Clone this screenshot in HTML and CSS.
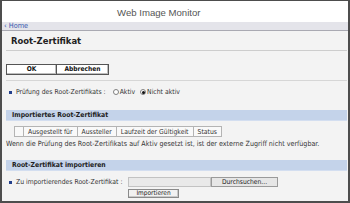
FILE: index.html
```html
<!DOCTYPE html>
<html lang="de">
<head>
<meta charset="utf-8">
<title>Root-Zertifikat</title>
<link rel="stylesheet" href="styles.css">
</head>
<body>
<div class="frame">
  <header class="top">Web Image Monitor</header>
  <nav class="crumb"><span class="crumb-link">‹ Home</span></nav>
  <main class="main">
    <h1 class="title">Root-Zertifikat</h1>
    <div class="btn-group">
      <button class="btn3d">OK</button><button class="btn3d">Abbrechen</button>
    </div>
    <div class="rule"></div>
    <div class="field-row">
      <span class="bullet"></span>
      <span class="label">Prüfung des Root-Zertifikats :</span>
      <span class="radio"></span><span class="radio-label">Aktiv</span>
      <span class="radio checked"></span><span class="radio-label">Nicht aktiv</span>
    </div>
    <h2 class="section">Importiertes Root-Zertifikat</h2>
    <div class="cert-table">
      <span class="cell cell-empty"></span>
      <span class="cell">Ausgestellt für</span>
      <span class="cell">Aussteller</span>
      <span class="cell">Laufzeit der Gültigkeit</span>
      <span class="cell">Status</span>
    </div>
    <p class="note">Wenn die Prüfung des Root-Zertifikats auf Aktiv gesetzt ist, ist der externe Zugriff nicht verfügbar.</p>
    <h2 class="section section-2">Root-Zertifikat importieren</h2>
    <div class="field-row import-row">
      <span class="bullet"></span>
      <span class="label import-label">Zu importierendes Root-Zertifikat :</span>
      <span class="file-input"></span><button class="browse">Durchsuchen...</button>
    </div>
    <div class="submit-row">
      <button class="submit">Importieren</button>
    </div>
  </main>
</div>
</body>
</html>
```
FILE: styles.css
```css
* { box-sizing: border-box; }
html, body { margin: 0; padding: 0; }
body {
  width: 350px;
  height: 203px;
  overflow: hidden;
  font-family: "DejaVu Sans Condensed", "DejaVu Sans", sans-serif;
  color: #333;
}
.frame {
  height: 203px;
  border-top: 1px solid #4d4d4d;
  border-left: 2px solid #4d4d4d;
  border-right: 2px solid #4d4d4d;
  border-bottom: 2px solid #4d4d4d;
  display: flex;
  flex-direction: column;
  background: #f3f3f3;
}
.top {
  height: 21px;
  background: #fff;
  font-family: "Liberation Sans", Arial, sans-serif;
  font-size: 9.6px;
  line-height: 23px;
  color: #555;
  padding-left: 115px;
}
.crumb {
  height: 9px;
  background: #e4e4ea;
  border-bottom: 1px solid #a9a9b2;
  padding-left: 2px;
  font-size: 7.3px;
  line-height: 8px;
}
.crumb-link { color: #3a5ab0; }
.main {
  flex: 1;
  padding: 0 1px 0 4px;
  display: flex;
  flex-direction: column;
}
.title {
  margin: 0;
  height: 20px;
  line-height: 19px;
  padding-left: 5px;
  font-size: 9.4px;
  font-weight: bold;
  color: #222;
  border-bottom: 1px solid #cdcdcd;
}
.btn-group {
  margin-top: 13px;
  display: flex;
  height: 11px;
}
.btn3d {
  height: 11px;
  width: 51px;
  padding: 0;
  margin: 0;
  background: #fff;
  border: 1px solid #555;
  box-shadow: inset -1px -1px 0 #bdbdbd;
  font-family: inherit;
  font-size: 6.6px;
  font-weight: bold;
  color: #111;
  line-height: 9px;
}
.btn3d + .btn3d { width: 52px; border-left: none; }
.rule {
  margin-top: 5px;
  border-top: 1px solid #d6d6d6;
}
.field-row {
  display: flex;
  align-items: center;
  height: 22px;
  font-size: 6.8px;
  color: #333;
}
.bullet {
  width: 3px;
  height: 3px;
  background: #233f8c;
  margin-left: 3px;
  margin-right: 4px;
  flex: none;
}
.radio {
  width: 6px;
  height: 6px;
  border-radius: 50%;
  border: 1px solid #808080;
  background: #fff;
  margin-left: 7px;
  margin-right: 1px;
  display: flex;
  align-items: center;
  justify-content: center;
  flex: none;
}
.radio + .radio-label + .radio { margin-left: 5px; }
.radio.checked::after {
  content: "";
  width: 3px;
  height: 3px;
  border-radius: 50%;
  background: #111;
}
.section {
  margin: 7px 0 0;
  height: 11px;
  line-height: 11px;
  padding-left: 6px;
  background: #c4d3ea;
  box-shadow: inset 0 -1px 0 #d3def0;
  font-size: 6.8px;
  font-weight: bold;
  color: #222;
}
.cert-table {
  margin: 5px 0 0 8px;
  display: flex;
  height: 11px;
}
.cell {
  height: 11px;
  line-height: 10px;
  padding: 0 4px;
  border: 1px solid #b4b4b4;
  border-left: none;
  background: #f9f9f9;
  font-size: 6.8px;
  color: #333;
  white-space: nowrap;
}
.cell-empty { width: 10px; border-left: 1px solid #b4b4b4; }
.note {
  margin: 0;
  height: 14px;
  line-height: 14px;
  font-size: 7.1px;
  color: #333;
  white-space: nowrap;
}
.section-2 { margin-top: 9px; }
.import-row {
  height: 10px;
  margin-top: 6px;
}
.import-label { width: 112px; flex: none; white-space: nowrap; }
.file-input {
  width: 83px;
  height: 10px;
  background: #e9e9e9;
  border: 1px solid #c2c2c2;
  flex: none;
}
.browse {
  width: 67px;
  height: 10px;
  margin: 0;
  padding: 0;
  background: #e6e6e6;
  border: 1px solid #9a9a9a;
  font-family: inherit;
  font-size: 6.7px;
  line-height: 8px;
  color: #222;
}
.submit-row {
  margin-top: 2px;
  padding-left: 122px;
  display: flex;
}
.submit {
  width: 51px;
  height: 9px;
  margin: 0;
  padding: 0;
  background: #f1f1f1;
  border: 1px solid #8a8a8a;
  box-shadow: inset -1px -1px 0 #c8c8c8;
  font-family: inherit;
  font-size: 6.5px;
  line-height: 7px;
  color: #222;
}
```
